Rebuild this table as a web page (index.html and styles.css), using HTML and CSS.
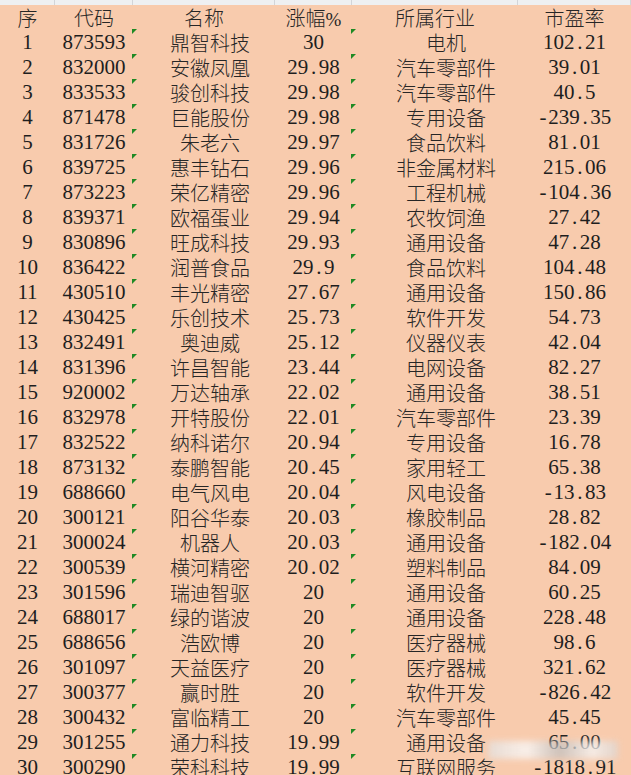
FILE: index.html
```html
<!DOCTYPE html>
<html lang="zh-CN">
<head>
<meta charset="utf-8">
<title>涨幅榜</title>
<link rel="stylesheet" href="styles.css">
</head>
<body>
<div class="sheet">
  <div class="row strip"><div></div><div></div><div></div><div></div><div></div><div></div></div>
  <div class="row head">
    <div class="c">序</div><div class="c">代码</div><div class="c">名称</div><div class="c">涨幅<span class="pct">%</span></div><div class="c">所属行业</div><div class="c">市盈率</div>
  </div>
  <div class="row"><div class="n">1</div><div class="n">873593</div><div class="c name tri">鼎智科技</div><div class="n">30</div><div class="c ind tri">电机</div><div class="n">102<span class="dot">.</span>21</div></div>
  <div class="row"><div class="n">2</div><div class="n">832000</div><div class="c name tri">安徽凤凰</div><div class="n">29<span class="dot">.</span>98</div><div class="c ind tri">汽车零部件</div><div class="n">39<span class="dot">.</span>01</div></div>
  <div class="row"><div class="n">3</div><div class="n">833533</div><div class="c name tri">骏创科技</div><div class="n">29<span class="dot">.</span>98</div><div class="c ind tri">汽车零部件</div><div class="n">40<span class="dot">.</span>5</div></div>
  <div class="row"><div class="n">4</div><div class="n">871478</div><div class="c name tri">巨能股份</div><div class="n">29<span class="dot">.</span>98</div><div class="c ind tri">专用设备</div><div class="n"><span class="minus">-</span>239<span class="dot">.</span>35</div></div>
  <div class="row"><div class="n">5</div><div class="n">831726</div><div class="c name tri">朱老六</div><div class="n">29<span class="dot">.</span>97</div><div class="c ind tri">食品饮料</div><div class="n">81<span class="dot">.</span>01</div></div>
  <div class="row"><div class="n">6</div><div class="n">839725</div><div class="c name tri">惠丰钻石</div><div class="n">29<span class="dot">.</span>96</div><div class="c ind tri">非金属材料</div><div class="n">215<span class="dot">.</span>06</div></div>
  <div class="row"><div class="n">7</div><div class="n">873223</div><div class="c name tri">荣亿精密</div><div class="n">29<span class="dot">.</span>96</div><div class="c ind tri">工程机械</div><div class="n"><span class="minus">-</span>104<span class="dot">.</span>36</div></div>
  <div class="row"><div class="n">8</div><div class="n">839371</div><div class="c name tri">欧福蛋业</div><div class="n">29<span class="dot">.</span>94</div><div class="c ind tri">农牧饲渔</div><div class="n">27<span class="dot">.</span>42</div></div>
  <div class="row"><div class="n">9</div><div class="n">830896</div><div class="c name tri">旺成科技</div><div class="n">29<span class="dot">.</span>93</div><div class="c ind tri">通用设备</div><div class="n">47<span class="dot">.</span>28</div></div>
  <div class="row"><div class="n">10</div><div class="n">836422</div><div class="c name tri">润普食品</div><div class="n">29<span class="dot">.</span>9</div><div class="c ind tri">食品饮料</div><div class="n">104<span class="dot">.</span>48</div></div>
  <div class="row"><div class="n">11</div><div class="n">430510</div><div class="c name tri">丰光精密</div><div class="n">27<span class="dot">.</span>67</div><div class="c ind tri">通用设备</div><div class="n">150<span class="dot">.</span>86</div></div>
  <div class="row"><div class="n">12</div><div class="n">430425</div><div class="c name tri">乐创技术</div><div class="n">25<span class="dot">.</span>73</div><div class="c ind tri">软件开发</div><div class="n">54<span class="dot">.</span>73</div></div>
  <div class="row"><div class="n">13</div><div class="n">832491</div><div class="c name tri">奥迪威</div><div class="n">25<span class="dot">.</span>12</div><div class="c ind tri">仪器仪表</div><div class="n">42<span class="dot">.</span>04</div></div>
  <div class="row"><div class="n">14</div><div class="n">831396</div><div class="c name tri">许昌智能</div><div class="n">23<span class="dot">.</span>44</div><div class="c ind tri">电网设备</div><div class="n">82<span class="dot">.</span>27</div></div>
  <div class="row"><div class="n">15</div><div class="n">920002</div><div class="c name tri">万达轴承</div><div class="n">22<span class="dot">.</span>02</div><div class="c ind tri">通用设备</div><div class="n">38<span class="dot">.</span>51</div></div>
  <div class="row"><div class="n">16</div><div class="n">832978</div><div class="c name tri">开特股份</div><div class="n">22<span class="dot">.</span>01</div><div class="c ind tri">汽车零部件</div><div class="n">23<span class="dot">.</span>39</div></div>
  <div class="row"><div class="n">17</div><div class="n">832522</div><div class="c name tri">纳科诺尔</div><div class="n">20<span class="dot">.</span>94</div><div class="c ind tri">专用设备</div><div class="n">16<span class="dot">.</span>78</div></div>
  <div class="row"><div class="n">18</div><div class="n">873132</div><div class="c name tri">泰鹏智能</div><div class="n">20<span class="dot">.</span>45</div><div class="c ind tri">家用轻工</div><div class="n">65<span class="dot">.</span>38</div></div>
  <div class="row"><div class="n">19</div><div class="n">688660</div><div class="c name tri">电气风电</div><div class="n">20<span class="dot">.</span>04</div><div class="c ind tri">风电设备</div><div class="n"><span class="minus">-</span>13<span class="dot">.</span>83</div></div>
  <div class="row"><div class="n">20</div><div class="n">300121</div><div class="c name tri">阳谷华泰</div><div class="n">20<span class="dot">.</span>03</div><div class="c ind tri">橡胶制品</div><div class="n">28<span class="dot">.</span>82</div></div>
  <div class="row"><div class="n">21</div><div class="n">300024</div><div class="c name tri">机器人</div><div class="n">20<span class="dot">.</span>03</div><div class="c ind tri">通用设备</div><div class="n"><span class="minus">-</span>182<span class="dot">.</span>04</div></div>
  <div class="row"><div class="n">22</div><div class="n">300539</div><div class="c name tri">横河精密</div><div class="n">20<span class="dot">.</span>02</div><div class="c ind tri">塑料制品</div><div class="n">84<span class="dot">.</span>09</div></div>
  <div class="row"><div class="n">23</div><div class="n">301596</div><div class="c name tri">瑞迪智驱</div><div class="n">20</div><div class="c ind tri">通用设备</div><div class="n">60<span class="dot">.</span>25</div></div>
  <div class="row"><div class="n">24</div><div class="n">688017</div><div class="c name tri">绿的谐波</div><div class="n">20</div><div class="c ind tri">通用设备</div><div class="n">228<span class="dot">.</span>48</div></div>
  <div class="row"><div class="n">25</div><div class="n">688656</div><div class="c name tri">浩欧博</div><div class="n">20</div><div class="c ind tri">医疗器械</div><div class="n">98<span class="dot">.</span>6</div></div>
  <div class="row"><div class="n">26</div><div class="n">301097</div><div class="c name tri">天益医疗</div><div class="n">20</div><div class="c ind tri">医疗器械</div><div class="n">321<span class="dot">.</span>62</div></div>
  <div class="row"><div class="n">27</div><div class="n">300377</div><div class="c name tri">赢时胜</div><div class="n">20</div><div class="c ind tri">软件开发</div><div class="n"><span class="minus">-</span>826<span class="dot">.</span>42</div></div>
  <div class="row"><div class="n">28</div><div class="n">300432</div><div class="c name tri">富临精工</div><div class="n">20</div><div class="c ind tri">汽车零部件</div><div class="n">45<span class="dot">.</span>45</div></div>
  <div class="row"><div class="n">29</div><div class="n">301255</div><div class="c name tri">通力科技</div><div class="n">19<span class="dot">.</span>99</div><div class="c ind tri">通用设备</div><div class="n">65<span class="dot">.</span>00</div></div>
  <div class="row"><div class="n">30</div><div class="n">300290</div><div class="c name tri">荣科科技</div><div class="n">19<span class="dot">.</span>99</div><div class="c ind tri">互联网服务</div><div class="n"><span class="minus">-</span>1818<span class="dot">.</span>91</div></div>
  <div class="watermark"></div>
</div>
</body>
</html>
```
FILE: styles.css
```css
html, body {
  margin: 0;
  padding: 0;
  background: #f8cbad;
}
body {
  width: 631px;
  height: 775px;
  overflow: hidden;
}
.sheet {
  position: relative;
  width: 631px;
  background: #f8cbad;
  color: #1e1e1e;
}
.row {
  display: grid;
  grid-template-columns: 55px 78px 142px 77px 166px 113px;
  height: 25px;
  line-height: 25px;
}
.row > div {
  text-align: center;
  white-space: nowrap;
  overflow: visible;
}
.strip {
  height: 5px;
  background: #eef0f2;
}
.strip > div {
  border-right: 1px solid #d2d5d9;
  box-sizing: border-box;
}
.c {
  font-family: "Noto Sans CJK SC", sans-serif;
  font-size: 20px;
  font-weight: 300;
  color: #262626;
}
.n {
  font-family: "Liberation Serif", "Noto Sans CJK SC", serif;
  font-size: 21px;
  color: #1e1e1e;
}
.dot {
  padding: 0 2.6px;
}
.minus {
  padding: 0 1.8px;
}
.pct {
  font-family: "Liberation Serif", serif;
  font-size: 19px;
}
.name {
  padding-left: 12px;
}
.ind {
  padding-left: 22px;
}
.tri {
  position: relative;
}
.tri::before {
  content: "";
  position: absolute;
  left: -1px;
  top: -1px;
  width: 0;
  height: 0;
  border-top: 5px solid #1f8a24;
  border-right: 5px solid transparent;
}
.watermark {
  position: absolute;
  left: 488px;
  top: 741px;
  width: 130px;
  height: 18px;
  background: linear-gradient(90deg, rgba(225,225,225,0.85), rgba(250,250,250,0.9) 30%, rgba(190,190,190,0.85) 55%, rgba(245,245,245,0.9) 80%, rgba(215,215,215,0.75));
  filter: blur(3px);
  opacity: 0.85;
}
```
